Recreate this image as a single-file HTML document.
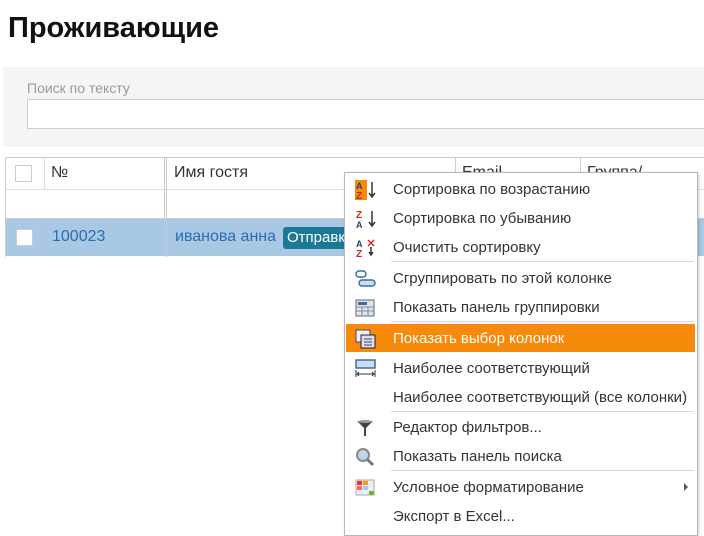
<!DOCTYPE html>
<html><head><meta charset="utf-8"><style>
body{margin:0;width:704px;height:536px;overflow:hidden;background:#fff;font-family:"Liberation Sans","DejaVu Sans",sans-serif;position:relative}
.a{position:absolute}
h1{position:absolute;left:8px;top:12px;margin:0;font-size:29px;font-weight:bold;color:#111;letter-spacing:0px}
.menu{position:absolute;left:344px;top:172px;width:352px;height:362px;background:#fff;border:1px solid #b8b8b8;box-shadow:1px 1px 3px rgba(0,0,0,.2)}
.it{position:absolute;left:1px;width:349px;height:28px;font-size:15px;color:#333;line-height:28px}
.it span{position:absolute;left:47px;top:1px}
.it svg{position:absolute;left:9px;top:5px}
.sep{position:absolute;left:46px;right:3px;height:1px;background:#d8d8d8}
.hl{background:#f7890b;color:#fff}
</style></head><body>
<h1>Проживающие</h1>
<div class="a" style="left:3px;top:67px;width:701px;height:80px;background:#f5f5f5"></div>
<div class="a" style="left:27px;top:80px;font-size:14px;color:#999">Поиск по тексту</div>
<div class="a" style="left:27px;top:99px;width:680px;height:30px;background:#fff;border:1px solid #ccc;box-sizing:border-box"></div>
<div class="a" style="left:5px;top:157px;width:699px;height:1px;background:#ccc"></div>
<div class="a" style="left:5px;top:157px;width:1px;height:100px;background:#ccc"></div>
<div class="a" style="left:5px;top:189px;width:699px;height:1px;background:#ddd"></div>
<div class="a" style="left:5px;top:218px;width:699px;height:1px;background:#ccc"></div>
<div class="a" style="left:44px;top:158px;width:1px;height:31px;background:#ddd"></div>
<div class="a" style="left:164px;top:158px;width:3px;height:99px;border-left:1px solid #ccc;border-right:1px solid #ccc;box-sizing:border-box"></div>
<div class="a" style="left:455px;top:158px;width:1px;height:31px;background:#ccc"></div>
<div class="a" style="left:580px;top:158px;width:1px;height:31px;background:#ccc"></div>
<div class="a" style="left:15px;top:165px;width:17px;height:17px;border:1px solid #ccc;box-sizing:border-box;background:#fff"></div>
<div class="a" style="left:51px;top:164px;font-size:16px;color:#333">№</div>
<div class="a" style="left:174px;top:164px;font-size:16px;color:#333">Имя гостя</div>
<div class="a" style="left:462px;top:164px;font-size:16px;color:#333">Email</div>
<div class="a" style="left:587px;top:164px;font-size:16px;color:#333">Группа/Компания</div>
<div class="a" style="left:6px;top:219px;width:698px;height:37px;background:#a8c8e4"></div>
<div class="a" style="left:164px;top:219px;width:3px;height:37px;border-left:1px solid #bcd;border-right:1px solid #bcd;box-sizing:border-box"></div>
<div class="a" style="left:16px;top:229px;width:17px;height:17px;border:1px solid #ccc;box-sizing:border-box;background:#fff"></div>
<div class="a" style="left:52px;top:228px;font-size:16px;color:#2a6db5">100023</div>
<div class="a" style="left:175px;top:228px;font-size:16px;color:#2a6db5">иванова анна</div>
<div class="a" style="left:283px;top:227px;width:70px;height:22px;background:#1a7a96;border-radius:3px;color:#fff;font-size:15px;line-height:22px;padding-left:4px;overflow:hidden;white-space:nowrap">Отправка</div>
<div class="menu">
<div class="it" style="top:2px"><svg width="22" height="20"><rect x="0" y="0" width="12" height="20" fill="#f7890b"/><text x="1" y="9" font-size="9" font-weight="bold" fill="#246">A</text><text x="1" y="19" font-size="10" font-weight="bold" fill="#c22">Z</text><path d="M17 2V17M14 13l3 4 3-4" stroke="#333" fill="none" stroke-width="1.5"/></svg><span>Сортировка по возрастанию</span></div>
<div class="it" style="top:31px"><svg width="22" height="20"><text x="1" y="9" font-size="10" font-weight="bold" fill="#c22">Z</text><text x="1" y="19" font-size="9" font-weight="bold" fill="#246">A</text><path d="M17 2V17M14 13l3 4 3-4" stroke="#333" fill="none" stroke-width="1.5"/></svg><span>Сортировка по убыванию</span></div>
<div class="it" style="top:60px"><svg width="22" height="20"><text x="1" y="9" font-size="9" font-weight="bold" fill="#246">A</text><text x="1" y="19" font-size="10" font-weight="bold" fill="#c22">Z</text><path d="M13 2l6 6M19 2l-6 6" stroke="#c22" stroke-width="1.3"/><path d="M16 9V17M14 14l2 3 2-3" stroke="#333" fill="none" stroke-width="1.5"/></svg><span>Очистить сортировку</span></div>
<div class="sep" style="top:88px"></div>
<div class="it" style="top:91px"><svg width="22" height="20"><rect x="1" y="2" width="10" height="6" rx="3" fill="none" stroke="#3a6ea5" stroke-width="1.5"/><rect x="4" y="11" width="16" height="6" rx="3" fill="#cde" stroke="#3a6ea5" stroke-width="1.5"/></svg><span>Сгруппировать по этой колонке</span></div>
<div class="it" style="top:120px"><svg width="22" height="20"><rect x="1" y="2" width="18" height="16" fill="#dde6f0" stroke="#667"/><rect x="3" y="4" width="9" height="3" fill="#3a6ea5"/><path d="M1 9H19M1 13H19M7 9V18M13 9V18" stroke="#889"/></svg><span>Показать панель группировки</span></div>
<div class="sep" style="top:148px"></div>
<div class="it hl" style="top:151px"><svg width="22" height="20"><rect x="1" y="1" width="14" height="12" fill="#eef" stroke="#445"/><rect x="6" y="6" width="14" height="13" fill="#dde" stroke="#222"/><path d="M9 10H17M9 13H17M9 16H17" stroke="#446"/></svg><span>Показать выбор колонок</span></div>
<div class="it" style="top:181px"><svg width="22" height="20"><rect x="1" y="1" width="19" height="8" fill="#cde" stroke="#3a6ea5" stroke-width="1.5"/><path d="M1 11V18M20 11V18M2 15H19M4 13l-2 2 2 2M17 13l2 2-2 2" stroke="#333" fill="none"/></svg><span>Наиболее соответствующий</span></div>
<div class="it" style="top:210px"><span>Наиболее соответствующий (все колонки)</span></div>
<div class="sep" style="top:238px"></div>
<div class="it" style="top:240px"><svg width="22" height="20"><path d="M2 3H18L11 10V18H9V10Z" fill="#444"/><ellipse cx="10" cy="3.5" rx="7" ry="1.5" fill="#999"/></svg><span>Редактор фильтров...</span></div>
<div class="it" style="top:269px"><svg width="22" height="20"><circle cx="8" cy="8" r="6" fill="#bcd8ee" stroke="#888" stroke-width="2"/><path d="M12 12l6 6" stroke="#777" stroke-width="3"/></svg><span>Показать панель поиска</span></div>
<div class="sep" style="top:297px"></div>
<div class="it" style="top:300px"><svg width="22" height="20"><rect x="1" y="2" width="18" height="15" fill="#eee" stroke="#aab"/><rect x="2" y="3" width="5" height="4" fill="#e33"/><rect x="8" y="3" width="5" height="4" fill="#f90"/><rect x="2" y="8" width="5" height="4" fill="#f66"/><rect x="14" y="13" width="5" height="4" fill="#6b3"/><rect x="8" y="8" width="5" height="4" fill="#9cf"/></svg><span>Условное форматирование</span><svg width="6" height="8" style="left:338px;top:10px"><path d="M0 0L4 4L0 8Z" fill="#555"/></svg></div>
<div class="it" style="top:329px"><span>Экспорт в Excel...</span></div>
</div>
</body></html>
